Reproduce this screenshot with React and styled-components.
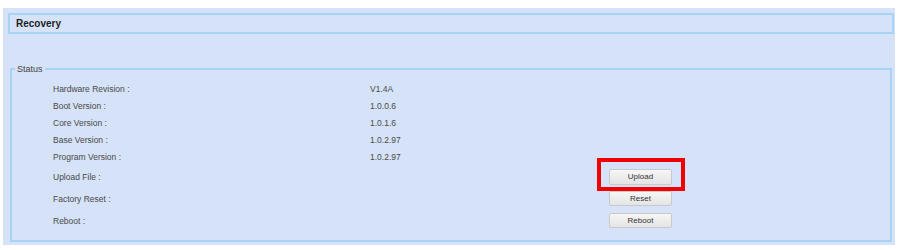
import React from "react";
import styled, { createGlobalStyle } from "styled-components";

const Global = createGlobalStyle`
  body {
    margin: 0;
    background: #fff;
    font-family: "Liberation Sans", Arial, sans-serif;
  }
`;

const Panel = styled.div`
  box-sizing: border-box;
  margin: 8px 0 0 3px;
  width: 892px;
  height: 237px;
  background: #d5e2f7;
  padding: 5px 1px 3px 5px;
`;

const Header = styled.div`
  box-sizing: border-box;
  height: 21px;
  border: 2px solid #a7d4f4;
  display: flex;
  align-items: center;
  padding-left: 6px;
  font-size: 10px;
  font-weight: bold;
  color: #1e1e1e;
`;

const Fieldset = styled.fieldset`
  box-sizing: border-box;
  margin: 30px 2px 0 2px;
  padding: 6px 0 0 0;
  height: 178px;
  border: 2px solid #a7d4f4;
  min-width: 0;
`;

const Legend = styled.legend`
  padding: 0 2px;
  margin-left: 3px;
  font-size: 9px;
  color: #444;
`;

const Body = styled.div`
  padding-left: 41px;
`;

const Row = styled.div`
  display: grid;
  grid-template-columns: 317px 239px 63px;
  align-items: center;
  height: ${(p) => p.$h}px;
  font-size: 8.5px;
  color: #4a4a4a;
`;

const ButtonWrap = styled.div`
  position: relative;
  display: flex;
`;

const Button = styled.button`
  box-sizing: border-box;
  width: 63px;
  height: ${(p) => p.$h || 15}px;
  padding: 0;
  border: 1px solid #c9c9c9;
  border-radius: 2px;
  background: linear-gradient(#f6f6f6, #e4e4e4);
  font-family: "Liberation Sans", Arial, sans-serif;
  font-size: 8px;
  color: #333;
`;

const Highlight = styled.span`
  position: absolute;
  left: -12px;
  right: -13px;
  top: -11px;
  bottom: -6px;
  border: 4px solid #f00000;
  pointer-events: none;
`;

const info = [
  ["Hardware Revision :", "V1.4A"],
  ["Boot Version :", "1.0.0.6"],
  ["Core Version :", "1.0.1.6"],
  ["Base Version :", "1.0.2.97"],
  ["Program Version :", "1.0.2.97"],
];

export default function App() {
  return (
    <>
      <Global />
      <Panel>
        <Header>Recovery</Header>
        <Fieldset>
          <Legend>Status</Legend>
          <Body>
            {info.map(([k, v]) => (
              <Row key={k} $h={17}>
                <span>{k}</span>
                <span>{v}</span>
              </Row>
            ))}
            <Row $h={23}>
              <span>Upload File :</span>
              <span />
              <ButtonWrap>
                <Button $h={16}>Upload</Button>
                <Highlight />
              </ButtonWrap>
            </Row>
            <Row $h={21}>
              <span>Factory Reset :</span>
              <span />
              <ButtonWrap>
                <Button>Reset</Button>
              </ButtonWrap>
            </Row>
            <Row $h={23}>
              <span>Reboot :</span>
              <span />
              <ButtonWrap>
                <Button>Reboot</Button>
              </ButtonWrap>
            </Row>
          </Body>
        </Fieldset>
      </Panel>
    </>
  );
}
